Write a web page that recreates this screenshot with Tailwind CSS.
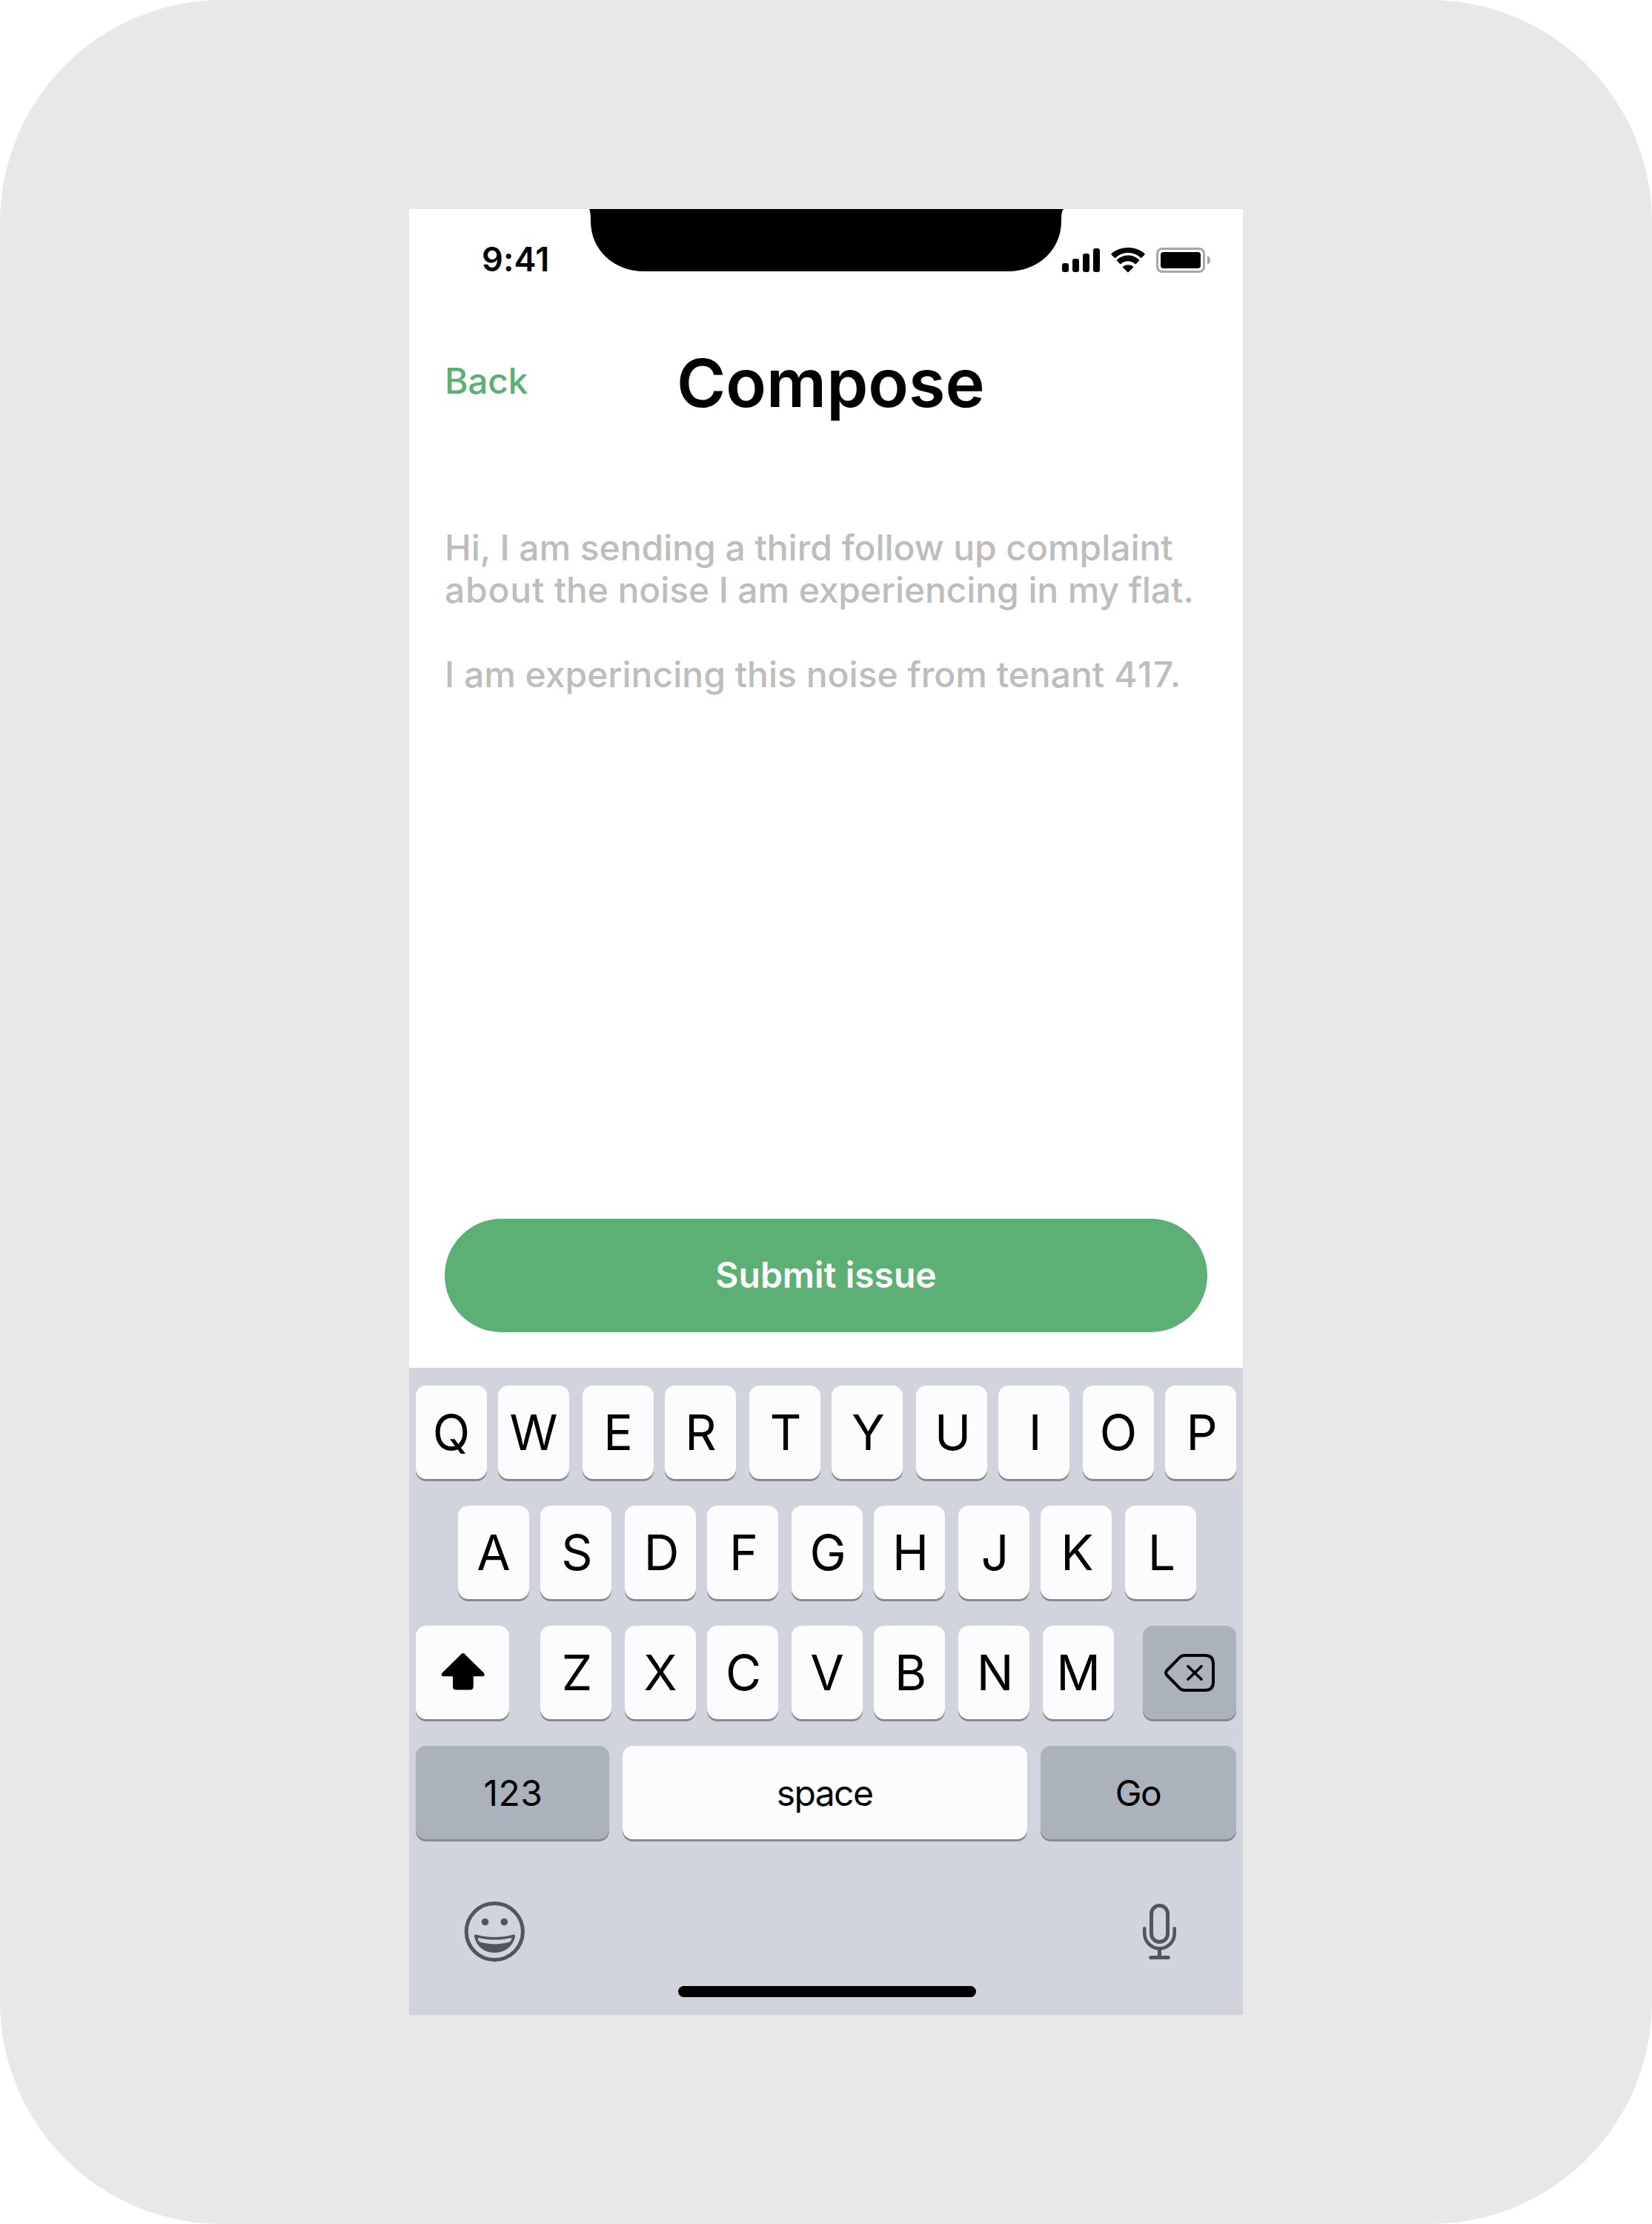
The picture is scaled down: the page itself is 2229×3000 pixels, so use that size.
<!DOCTYPE html>
<html lang="en">
<head>
<meta charset="utf-8">
<title>Compose</title>
<script src="https://cdn.jsdelivr.net/npm/@tailwindcss/browser@4"></script>
</head>
<body class="bg-white font-['Inter',sans-serif] text-black">
<main class="flex h-[3000px] w-[2229px] flex-col rounded-[300px] bg-[#e8e8e8] pt-[282px] pl-[552px]">
  <section class="flex h-[2436px] w-[1125px] flex-col bg-white">

    <!-- Status bar -->
    <div class="flex h-[84px]">
      <div class="w-[243px] pt-[41px] pl-[98px]"><span class="block text-[45px] leading-[54px] font-semibold tracking-[0.2px]">9:41</span></div>
      <svg class="h-[84px] w-[640px] shrink-0" viewBox="0 0 640 84"><path d="M0 0C1.500 3 2 8 2 16C2 56 34 84 74 84H565C605 84 637 56 637 16C637 8 637.500 3 640 0Z"/></svg>
      <svg class="mt-[52px] -ml-[2px] h-[36px] w-[202px] shrink-0" viewBox="0 0 202 36">
        <rect x="0" y="21" width="9" height="12" rx="3"/><rect x="14" y="15" width="9" height="18" rx="3"/><rect x="28" y="8" width="9" height="25" rx="3"/><rect x="42" y="1" width="9" height="32" rx="3"/>
        <path d="M89 7c6.300 0 12.400 2.500 17 6.800.4.300.9.300 1.300 0l4.200-4.200c.4-.4.400-1 0-1.400C99-2.700 79-2.700 66.600 8.200c-.4.400-.4 1 0 1.400l4.200 4.200c.4.300.9.300 1.300 0C76.700 9.500 82.800 7 89 7z"/>
        <path d="M89 18.300c3.500 0 6.800 1.300 9.400 3.600.4.400 1 .4 1.400 0l4.100-4.200c.4-.4.400-1.100 0-1.500-8.400-7.700-21.400-7.700-29.800 0-.4.400-.4 1.100 0 1.500l4.100 4.200c.4.400 1 .4 1.400 0 2.600-2.300 5.900-3.600 9.400-3.600z"/>
        <path d="M95.800 27c.4-.4.400-1 0-1.400-3.900-3.300-9.700-3.300-13.600 0-.4.400-.4 1 0 1.400l6.100 6.100c.4.400 1 .4 1.400 0z"/>
        <rect x="128.500" y="1.500" width="63" height="31" rx="6.500" fill="none" stroke="#a6a6a6" stroke-width="3"/>
        <rect x="133" y="6" width="54" height="22" rx="4"/>
        <path d="M196 11c2.400 1 4 3.300 4 6s-1.600 5-4 6z" fill="#a6a6a6"/>
      </svg>
    </div>

    <!-- Navigation header -->
    <header class="flex h-[204px] pt-[97px] pl-[48px]">
      <a class="w-[313px] pt-[22px] text-[48px] leading-[57px] font-medium tracking-[-0.3px] text-[#5db075]">Back</a>
      <h1 class="text-[90px] leading-[108px] font-semibold">Compose</h1>
    </header>

    <!-- Message -->
    <div class="flex-1 pt-[140px] pl-[48px] text-[48px] leading-[57px] font-medium whitespace-nowrap text-[#bdbdbd]">
      <p class="tracking-[-0.05px]">Hi, I am sending a third follow up complaint</p>
      <p class="tracking-[-0.12px]"><span class="tracking-[0.8px]">about</span> the noise I am experiencing in my flat.</p>
      <p class="mt-[57px]">I am experincing this noise from tenant <span class="tracking-[1.4px]">417.</span></p>
    </div>

    <button class="mx-[48px] mb-[48px] h-[153px] rounded-full bg-[#5db075] pb-[2px] text-[48px] leading-[57px] font-semibold text-white">Submit issue</button>

    <!-- Keyboard -->
    <div class="flex h-[873px] flex-col bg-[#d1d4dc] px-[9px] pt-[24px] text-[66px] leading-none [&_kbd]:flex [&_kbd]:h-[126px] [&_kbd]:shrink-0 [&_kbd]:items-center [&_kbd]:justify-center [&_kbd]:rounded-[14px] [&_kbd]:font-['Inter',sans-serif] [&_kbd]:shadow-[0_3px_0_#898a8d]">
      <div class="mb-[36px] flex [&>kbd]:w-[96px] [&>kbd]:bg-[#fcfcfe] [&>kbd:nth-child(even)]:mr-[18px] [&>kbd:nth-child(odd)]:mr-[15px]">
        <kbd>Q</kbd><kbd>W</kbd><kbd>E</kbd><kbd class="pl-[1px]">R</kbd><kbd class="pl-[2px]">T</kbd><kbd class="pl-[3px]">Y</kbd><kbd class="pl-[3px]">U</kbd><kbd class="pl-[3px]">I</kbd><kbd>O</kbd><kbd class="pl-[3px]">P</kbd>
      </div>
      <div class="mb-[36px] flex pl-[57px] [&>kbd]:w-[96px] [&>kbd]:bg-[#fcfcfe] [&>kbd:nth-child(even)]:mr-[18px] [&>kbd:nth-child(odd)]:mr-[15px]">
        <kbd>A</kbd><kbd class="pl-[3px]">S</kbd><kbd class="pl-[3px]">D</kbd><kbd class="pl-[3px]">F</kbd><kbd class="pl-[2px]">G</kbd><kbd class="pl-[3px]">H</kbd><kbd class="pl-[3px]">J</kbd><kbd class="pl-[3px]">K</kbd><kbd class="pl-[3px]">L</kbd>
      </div>
      <div class="mb-[36px] flex [&>kbd]:w-[96px] [&>kbd:nth-child(even)]:mr-[18px] [&>kbd:nth-child(odd)]:mr-[15px]">
        <kbd class="min-w-[126px] bg-[#fcfcfe] pl-[1px]">
          <svg class="-mt-[3px] h-[50px] w-[58px] overflow-visible" viewBox="0 0 58 50"><path d="M27.100.600Q28.700-.800 30.300.600L56.700 26.600C58.500 28.500 57.800 31.300 55.200 31.300H42.700V45Q42.700 49.500 38.200 49.500H19.500Q15 49.500 15 45V31.300H2.200C-.4 31.300-1.100 28.500.7 26.600Z"/></svg>
        </kbd>
        <kbd class="ml-[27px] bg-[#fcfcfe] pl-[3px]">Z</kbd><kbd class="bg-[#fcfcfe]">X</kbd><kbd class="bg-[#fcfcfe] pl-[2px]">C</kbd><kbd class="bg-[#fcfcfe]">V</kbd><kbd class="bg-[#fcfcfe] pl-[3px]">B</kbd><kbd class="bg-[#fcfcfe] pl-[3px]">N</kbd><kbd class="ml-[3px] bg-[#fcfcfe]">M</kbd>
        <kbd class="ml-[21px] min-w-[126px] bg-[#abb2bc]">
          <svg class="h-[51px] w-[68px]" viewBox="0 0 68 51" fill="none" stroke="#000" stroke-linecap="round" stroke-linejoin="round"><path stroke-width="4" d="M27.500 2H54.500Q66 2 66 13V38Q66 49 54.500 49H27.500Q23.500 49 20.800 46.300L3.300 28.500Q.8 25.500 3.300 22.500L20.800 4.700Q23.500 2 27.500 2Z"/><path stroke-width="3.600" d="M32 16.700L50 34.300M50 16.700L32 34.300"/></svg>
        </kbd>
      </div>
      <div class="flex gap-[18px] text-[48px]">
        <kbd class="w-[261px] bg-[#abb2bc] pt-[2px] pl-[2px] tracking-[0.6px]">123</kbd>
        <kbd class="w-[546px] bg-[#fcfcfe] pt-[2px] pr-[1px] tracking-[-1.6px]">space</kbd>
        <kbd class="w-[264px] bg-[#abb2bc] pt-[2px] pr-[1px] tracking-[-1.6px]">Go</kbd>
      </div>

      <div class="mt-[84px] flex justify-between pr-[81px] pl-[65px]">
        <svg class="h-[82px] w-[83px]" viewBox="0 0 83 82" fill="#50555e">
          <circle cx="41.300" cy="40.600" r="38.100" fill="none" stroke="#50555e" stroke-width="5"/>
          <circle cx="28.500" cy="27.500" r="4.800"/><circle cx="54.300" cy="27.500" r="4.800"/>
          <path fill-rule="evenodd" d="M17 44.700C32 49 51 49 66 44.700C68.500 44 69.500 45.500 69 47.500C66 61 55 69 41.300 69C27.500 69 17 61 14 47.500C13.500 45.500 14.500 44 17 44.700ZM21 49.200C34 52.400 49 52.400 62 49.200C64.300 48.700 65 50 63.700 52C62.700 53.800 61.700 54.600 60 55C48 58.300 35 58.300 22.700 55C21 54.500 20.200 53.500 19.300 52C18.300 50 18.700 48.700 21 49.200Z"/>
        </svg>
        <svg class="mt-[3px] h-[76px] w-[45px]" viewBox="0 0 45 76" fill="none" stroke="#50555e" stroke-width="5" stroke-linecap="round">
          <rect x="11.500" y="2.500" width="22" height="49" rx="11"/>
          <path stroke-width="4.600" d="M2.300 33.300V40.100A20.200 20.200 0 0 0 42.700 40.100V33.300"/>
          <path d="M22.500 61V72M10.700 72.500H34.300"/>
        </svg>
      </div>
      <div class="mt-[32px] ml-[354px] h-[15px] w-[402px] rounded-full bg-black"></div>
    </div>
  </section>
</main>
</body>
</html>
